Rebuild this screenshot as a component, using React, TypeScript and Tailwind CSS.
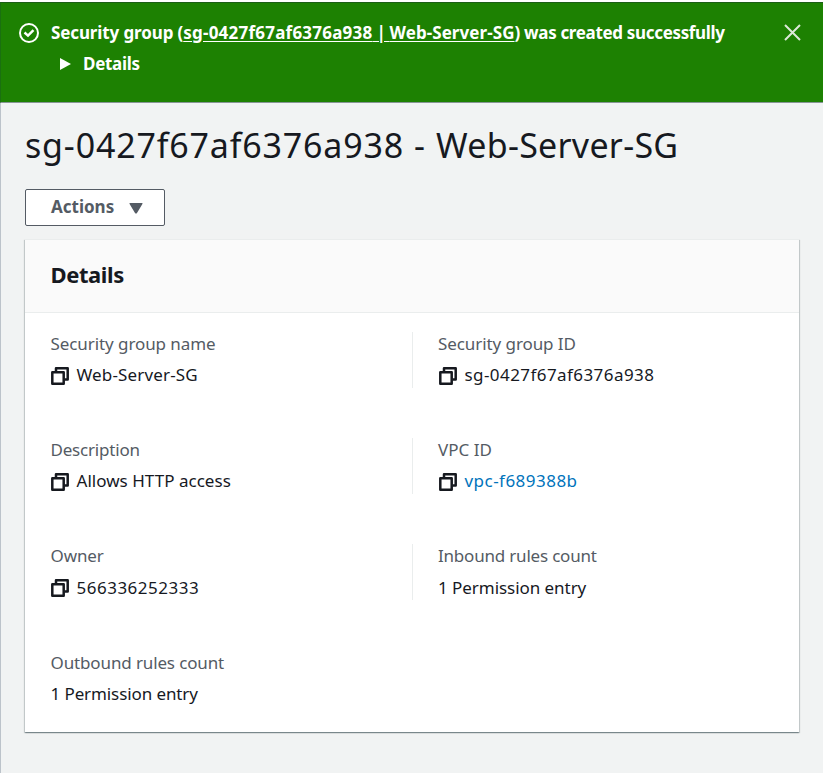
import type { ReactNode } from "react";

function CopyIcon({ className }: { className: string }) {
  return (
    <svg className={`mt-[2.9px] h-[18px] w-[18px] shrink-0 ${className}`} viewBox="0 0 18 18" fill="none" stroke="#16191f" strokeWidth="2.5" strokeLinejoin="round">
      <path d="M5 4.5V1.3H16.7V12.5H13.5" />
      <path d="M1.3 5.3H12.7V16.7H1.3Z" />
    </svg>
  );
}

type FieldProps = { label: string; labelClass: string; copy?: boolean; divided?: boolean; children: ReactNode };

function Field({ label, labelClass, copy, divided, children }: FieldProps) {
  return (
    <div className={`h-[56px] ${divided ? "border-l border-[#eaeded] pl-[25px]" : "pl-[25.5px]"}`}>
      <div className={`h-[32.15px] whitespace-nowrap leading-[24px] text-[#545b64] ${labelClass}`}>{label}</div>
      <div className="flex h-[23.8px] whitespace-nowrap leading-[22px] text-[#16191f]">
        {copy && <CopyIcon className={divided ? "ml-px mr-[7.5px]" : "mr-2"} />}
        {children}
      </div>
    </div>
  );
}

export default function App() {
  return (
    <div className="h-[773px] w-[823px] overflow-hidden bg-[#f1f3f3] pt-[2px] font-['Noto_Sans','Liberation_Sans',sans-serif] text-[17px] shadow-[inset_0_2px_0_#fff]">
      <div className="flex h-[101px] border-t border-b border-l border-t-[#1b5e16] border-b-[#879596] border-l-[#1a7010] bg-[#1d8102] pl-[18px] font-bold text-white">
        <svg className="mt-[20px] h-5 w-5 shrink-0" viewBox="0 0 20 20" fill="none" stroke="#fff" strokeWidth="2">
          <circle cx="10" cy="10" r="9" />
          <path d="M5.5 9.5L9 12.7L14.5 7.2" strokeWidth="2.4" />
        </svg>
        <div className="ml-[12px] w-[733px] pt-[18px]">
          <div className="h-[31px] whitespace-nowrap leading-[24px] tracking-[-0.33px]">
            <span className="tracking-[-0.12px]">Security group (</span>
            <a className="underline underline-offset-2 tracking-[0.07px]"><span className="tracking-[0.23px]">sg-0427f67af6376a938</span><span className="tracking-[-0.4px]"> | </span>Web-Server-SG</a>) was created successfully
          </div>
          <div className="flex items-center pl-[9px] leading-[24px] tracking-[-0.3px]">
            <svg className="mr-[12px] h-[14px] w-[11px]" viewBox="0 0 11 14" fill="#fff"><path d="M0 1L11 7L0 13Z" /></svg>
            Details
          </div>
        </div>
        <svg className="mt-[21px] h-[17px] w-[17px] shrink-0" viewBox="0 0 17 17" fill="none" stroke="#dce8d8" strokeWidth="2">
          <path d="M1 1L16 16M16 1L1 16" />
        </svg>
      </div>
      <main className="h-[670px] border-l border-[#bcc3ca] pl-[24px] pt-[21px]">
        <h1 className="h-[65px] whitespace-nowrap text-[34px] leading-[42px] tracking-[0.28px] text-[#16191f]"><span className="tracking-[0.83px]">sg-0427f67af6376a938</span><span className="tracking-[1.1px]"> - </span>Web-Server-SG</h1>
        <button className="flex h-[37px] w-[140px] items-center rounded-[2px] border border-[#545b64] bg-white pl-[25px] font-bold text-[#545b64]">
          <span className="-mt-[2px] w-[78px] text-left leading-[24px]">Actions</span>
          <svg className="mt-px h-[11px] w-[14px]" viewBox="0 0 14 11" fill="#545b64"><path d="M1 0H13Q14 0 13.4 1L8 10Q7 11 6 10L.6 1Q0 0 1 0Z" /></svg>
        </button>
        <section className="mt-[13px] h-[493px] w-[774px] border-t border-[#eaeded] bg-white shadow-[0_1px_1px_0_rgba(0,28,36,0.3),1px_1px_1px_0_rgba(0,28,36,0.15),-1px_1px_1px_0_rgba(0,28,36,0.15)]">
          <h2 className="h-[73px] border-b border-[#eaeded] bg-[#fafafa] pl-[25.5px] pt-[19px] text-[22px] font-bold leading-[30px] tracking-[-0.4px] text-[#16191f]">Details</h2>
          <div className="grid grid-cols-[387px_387px] gap-y-[50.2px] pt-[19px]">
            <Field label="Security group name" labelClass="tracking-[-0.08px]" copy><span className="tracking-[0.15px]">Web-Server-SG</span></Field>
            <Field label="Security group ID" labelClass="tracking-[-0.08px]" copy divided><span className="tracking-[0.43px]">sg-0427f67af6376a938</span></Field>
            <Field label="Description" labelClass="tracking-[-0.2px]" copy><span className="tracking-[0.03px]">Allows HTTP access</span></Field>
            <Field label="VPC ID" labelClass="" copy divided><span className="tracking-[0.47px] text-[#0073bb]">vpc-f689388b</span></Field>
            <Field label="Owner" labelClass="tracking-[-0.1px]" copy><span className="tracking-[0.5px]">566336252333</span></Field>
            <Field label="Inbound rules count" labelClass="tracking-[-0.2px]" divided><span className="tracking-[-0.05px]">1 Permission entry</span></Field>
            <Field label="Outbound rules count" labelClass="tracking-[-0.13px]"><span className="tracking-[-0.1px]">1 Permission entry</span></Field>
          </div>
        </section>
      </main>
    </div>
  );
}
